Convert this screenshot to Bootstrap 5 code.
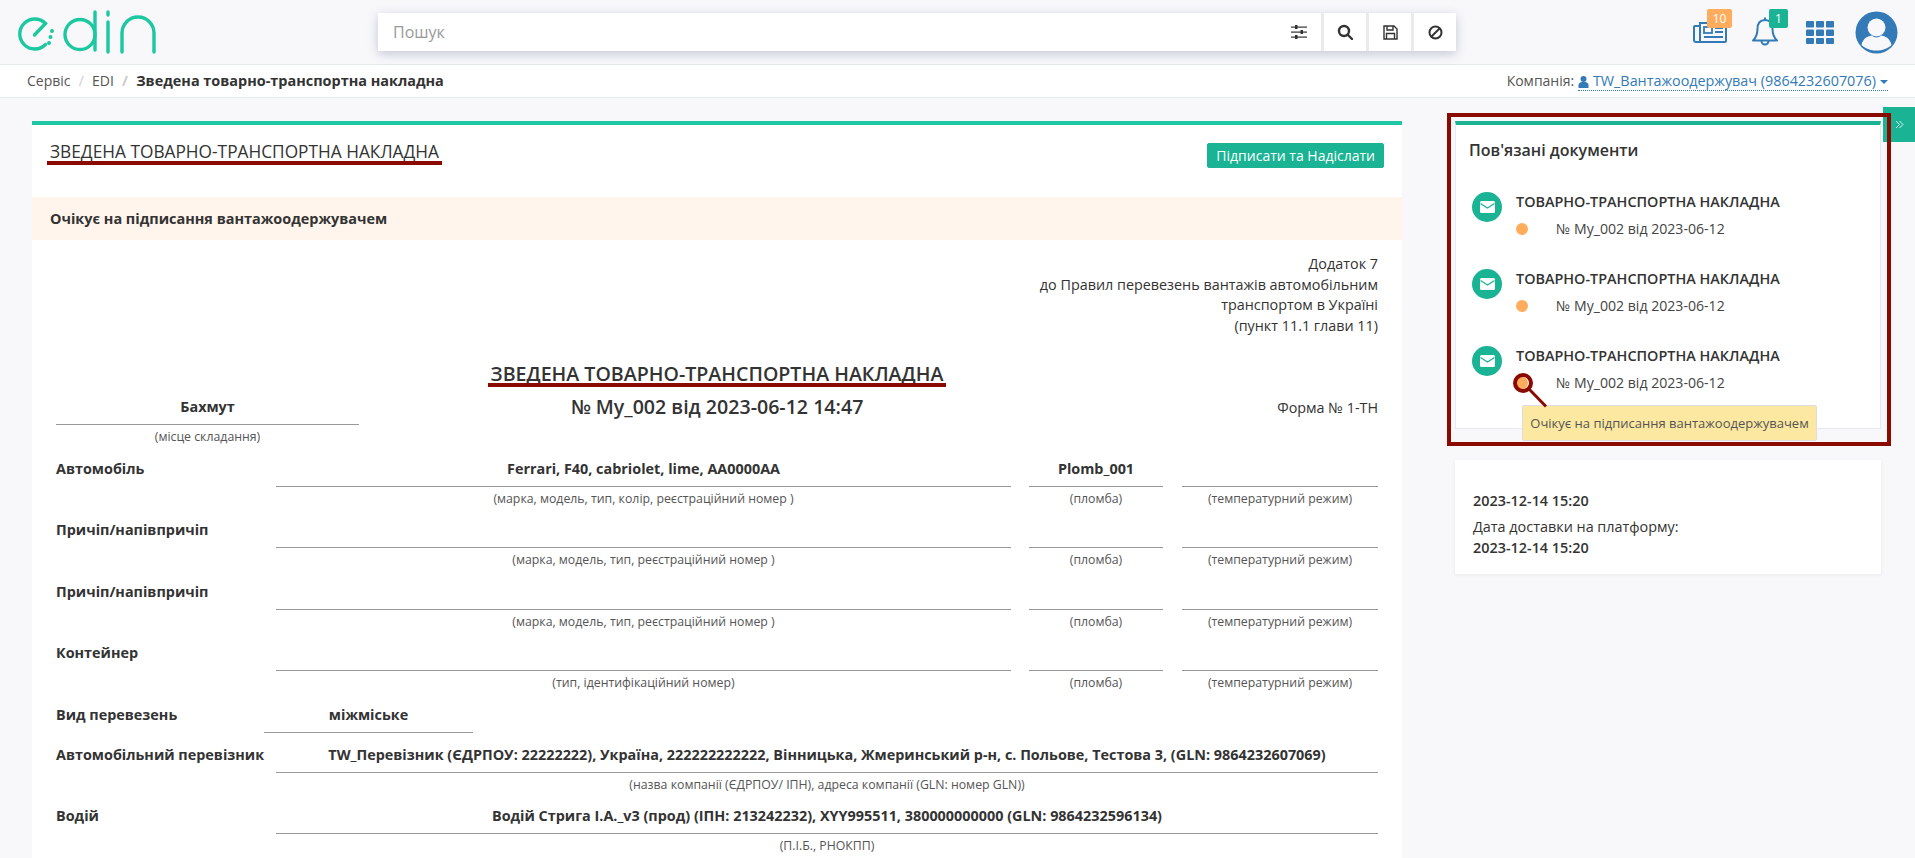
<!DOCTYPE html>
<html lang="uk">
<head>
  <meta charset="UTF-8">
  <meta name="viewport" content="width=device-width, initial-scale=1.0">
  <title>Зведена товарно-транспортна накладна</title>
  <link href="https://cdn.jsdelivr.net/npm/bootstrap@5.3.0/dist/css/bootstrap.min.css" rel="stylesheet">
  <style>
    html, body { height: 858px; overflow: hidden; }
    body { background: #f8f8fb; color: #333; font-family: "Open Sans", "Noto Sans", sans-serif; font-size: 14px; line-height: 20.5px; }

    /* header */
    .top-head { height: 65px; border-bottom: 1px solid #e7eaec; }
    .search-box { width: 1078px; height: 38px; margin-left: 208px; background: #fff; box-shadow: 0 3px 10px rgba(70, 75, 110, .28); }
    .search-text { padding-left: 15px; font-size: 16px; color: #999; }
    .search-btn { width: 45px; height: 38px; border-left: 3px solid #e9e9ee; }
    .search-btn-first { border-left: 0; }
    .head-icons { margin-right: 17px; }
    .head-icon { height: 44px; }
    .head-badge { position: absolute; top: -1px; height: 19px; border-radius: 2px; color: #fff; font-size: 12px; line-height: 19px; text-align: center; }
    .bg-orange { background: #ffad5c; }
    .bg-teal { background: #1ab394; }

    /* breadcrumb */
    .crumb-bar { height: 33px; padding: 0 27px 0 27px; background: #fff; border-bottom: 1px solid #e7eaec; }
    .crumb-bar .breadcrumb { --bs-breadcrumb-margin-bottom: 0; --bs-breadcrumb-divider-color: #ccc; --bs-breadcrumb-item-active-color: #333; --bs-breadcrumb-item-padding-x: 8.2px; color: #555; }
    .crumb-bold { font-weight: 700; font-size: 14.45px; }
    .company-link { color: #337ab7; text-decoration: none; border-bottom: 1px dotted #337ab7; line-height: 18px; font-size: 14.37px; }
    .company-text { color: #555; margin-right: 4px; }
    .caret-down { display: inline-block; margin-left: 4px; border: 4px solid transparent; border-top-color: #337ab7; border-bottom: 0; vertical-align: 2px; }

    /* layout */
    .page-body { padding: 23px 0 0 32px; }
    .main-sheet { width: 1370px; height: 760px; overflow: hidden; background: #fff; border-top: 4px solid #1fc8a5; }
    .side-col { width: 426px; margin-left: 53px; }
    .sheet-head { height: 72px; padding: 14px 18px 0 18px; }
    .sheet-title { font-size: 17.3px; line-height: 26px; margin: 0; font-weight: 400; text-transform: uppercase; }
    .sign-btn { --bs-btn-bg: #1ab394; --bs-btn-border-color: #1ab394; --bs-btn-color: #fff; --bs-btn-hover-bg: #18a689; --bs-btn-hover-color: #fff; --bs-btn-border-radius: 2px; --bs-btn-padding-y: 0; --bs-btn-padding-x: 8px; --bs-btn-font-size: 14px; --bs-btn-line-height: 23px; margin-top: 4px; }
    .state-strip { height: 43px; padding: 2px 0 0 18px; background: #fff5ec; font-weight: 700; font-size: 14.45px; }

    /* red annotations */
    .red-under { position: relative; display: inline-block; }
    .red-under::after { content: ""; position: absolute; left: -3px; right: -3px; bottom: 0; height: 4px; background: #8b0a00; }
    .red-frame { position: absolute; top: -8px; left: -8px; right: -10px; bottom: -17px; border: 4px solid #8b0a00; pointer-events: none; z-index: 3; }
    .red-pin { position: absolute; left: 54px; top: 248px; z-index: 4; }
    .side-toggle { position: absolute; top: 107px; right: 0; width: 32px; height: 35px; background: #1ab394; z-index: 2; }

    /* document */
    .doc-form { padding: 14px 24px 0 24px; }
    .doc-note { font-size: 14.36px; line-height: 20.5px; }
    .doc-title { margin: 25px 0 4px; font-size: 19.6px; font-weight: 600; line-height: 26px; text-transform: uppercase; }
    .doc-number { font-size: 19.6px; font-weight: 600; line-height: 32px; }
    .doc-form-no { font-size: 14.36px; line-height: 34px; }
    .form-row { display: flex; }
    .cell-value { height: 34px; line-height: 32px; text-align: center; font-weight: 700; font-size: 14.4px; border-bottom: 1px solid #999; }
    .cell-hint { height: 27.5px; padding-top: 2px; line-height: 20px; text-align: center; font-size: 12.3px; color: #555; }
    .form-label-cell { width: 220px; flex: none; line-height: 32px; font-weight: 700; font-size: 14.4px; white-space: nowrap; }
    .col-wide { width: 735px; }
    .col-full { width: 1102px; }
    .col-plomb { width: 134px; margin-left: 18px; }
    .col-temp { width: 196px; margin-left: 19px; }
    .col-place { width: 303px; flex: none; }
    .kind-row { margin-bottom: 6px; }
    .kind-row .form-label-cell { width: 208px; }
    .kind-value { width: 209px; }

    /* related documents */
    .rel-wrap { position: relative; }
    .rel-card { height: 308px; background: #fff; border: 1px solid #e7eaec; border-top: 4px solid #1ab394; padding: 0 13px; }
    .rel-title { margin: 0; padding-top: 12px; height: 67px; font-size: 16px; font-weight: 600; line-height: 26px; }
    .rel-item { height: 77px; }
    .rel-icon { width: 30px; height: 30px; flex: none; border-radius: 50%; background: #1ab394; margin-left: 3px; margin-right: 14px; }
    .rel-name { font-weight: 600; font-size: 14.4px; line-height: 20px; }
    .rel-sub { margin-top: 7px; line-height: 20px; font-size: 14.1px; color: #444; }
    .rel-dot { display: inline-block; width: 12px; height: 12px; border-radius: 50%; background: #ffad5c; margin-right: 28px; vertical-align: -1px; }
    .state-tip { position: absolute; left: 67px; top: 284px; width: 295px; height: 36px; background: #fce8a0; border: 1px solid #ddd; border-radius: 2px; color: #555; font-size: 13px; line-height: 34px; text-align: center; z-index: 2; }
    .date-card { margin-top: 31px; height: 114px; padding: 30px 18px 0; background: #fff; box-shadow: 0 1px 4px rgba(60, 60, 90, .08); line-height: 21px; font-size: 14.4px; }
    .date-card b { display: block; font-weight: 600; }
    .date-card b:first-child { margin-bottom: 5px; }
    .date-card p { margin: 0; }
  </style>
</head>
<body>

<!-- Header -->
<header class="top-head d-flex align-items-center">
  <svg width="170" height="64" viewBox="0 0 170 64" fill="none" stroke="#1cc8a0" stroke-width="3.4" stroke-linecap="round">
    <path d="M34.5 35 L45.5 23.500 A15 15 0 1 0 45.500 44.500"/>
    <circle cx="52" cy="31" r="1.2" fill="#1cc8a0" stroke-width="1.6"/>
    <circle cx="50.5" cy="37" r="1.2" fill="#1cc8a0" stroke-width="1.6"/>
    <circle cx="49" cy="43" r="1.2" fill="#1cc8a0" stroke-width="1.6"/>
    <circle cx="80" cy="34.500" r="15"/>
    <path d="M95 12 V50"/>
    <path d="M108 12 V15 M108 22 V52"/>
    <path d="M122 52 V33 A16 16 0 0 1 154 33 V52"/>
  </svg>
  <div class="search-box d-flex align-items-center">
    <span class="search-text flex-grow-1">Пошук</span>
    <span class="search-btn search-btn-first d-flex align-items-center justify-content-center">
      <svg width="16" height="14" viewBox="0 0 16 14" fill="#333"><rect y="1.5" width="16" height="1.2"/><rect y="6.5" width="16" height="1.2"/><rect y="11.5" width="16" height="1.2"/><rect x="4" y="0" width="2.5" height="4"/><rect x="9.5" y="5" width="2.5" height="4"/><rect x="4" y="10" width="2.5" height="4"/></svg>
    </span>
    <span class="search-btn d-flex align-items-center justify-content-center">
      <svg width="16" height="16" viewBox="0 0 16 16" fill="none" stroke="#333" stroke-width="2.4"><circle cx="7" cy="7" r="5"/><path d="M10.5 10.5 L15 15" stroke-linecap="round"/></svg>
    </span>
    <span class="search-btn d-flex align-items-center justify-content-center">
      <svg width="15" height="15" viewBox="0 0 15 15" fill="none" stroke="#333" stroke-width="1.4"><path d="M1 1 H11 L14 4 V14 H1 Z"/><path d="M4 1 V5 H10 V1"/><path d="M3.5 14 V8.5 H11.5 V14"/></svg>
    </span>
    <span class="search-btn d-flex align-items-center justify-content-center">
      <svg width="15" height="15" viewBox="0 0 15 15" fill="none" stroke="#333" stroke-width="2"><circle cx="7.5" cy="7.5" r="6"/><path d="M3.5 11.5 L11.5 3.5"/></svg>
    </span>
  </div>
  <div class="head-icons ms-auto d-flex align-items-center">
    <div class="head-icon position-relative">
      <svg width="34" height="44" viewBox="0 10 34 44" fill="none" stroke="#337ab7" stroke-width="2"><path d="M7 23 V42 H32 a1 1 0 0 0 1 -1 V23 Z"/><path d="M7 26 H2 a1 1 0 0 0 -1 1 V40 a2 2 0 0 0 2 2 H8"/><rect x="11" y="27" width="8" height="6" stroke-width="1.8"/><path d="M22 28 H30 M22 32 H30 M11 37 H30" stroke-width="1.8"/></svg>
      <span class="head-badge bg-orange" style="left:14px;width:25px">10</span>
    </div>
    <div class="head-icon position-relative ms-4">
      <svg width="28" height="44" viewBox="0 10 28 44" fill="none" stroke="#337ab7" stroke-width="2" stroke-linejoin="round"><path d="M14 20 C8 20 6.500 24 6.500 29 C6.500 35 4.500 38 2 40.500 H26 C23.500 38 21.500 35 21.500 29 C21.500 24 20 20 14 20 Z"/><path d="M10.500 41 a3.500 3.500 0 0 0 7 0"/><path d="M14 17.500 V20"/></svg>
      <span class="head-badge bg-teal" style="left:18px;width:19px">1</span>
    </div>
    <div class="head-icon ms-4">
      <svg width="36" height="44" viewBox="0 10 36 44" fill="#337ab7"><rect x="3" y="21" width="8" height="6.500" rx="1"/><rect x="13" y="21" width="8" height="6.500" rx="1"/><rect x="23" y="21" width="8" height="6.500" rx="1"/><rect x="3" y="29.500" width="8" height="6.500" rx="1"/><rect x="13" y="29.500" width="8" height="6.500" rx="1"/><rect x="23" y="29.500" width="8" height="6.500" rx="1"/><rect x="3" y="38" width="8" height="6" rx="1"/><rect x="13" y="38" width="8" height="6" rx="1"/><rect x="23" y="38" width="8" height="6" rx="1"/></svg>
    </div>
    <svg class="ms-3" width="43" height="43" viewBox="0 0 43 43"><circle cx="21.500" cy="21.500" r="21" fill="#337ab7"/><circle cx="21.500" cy="16.500" r="9" fill="#f8f8fb"/><path d="M6.500 34 C8 27 13 25 17 24.500 C19 27 24 27 26 24.500 C30 25 35 27 36.500 34 C33 37.500 27.500 39.500 21.500 39.500 C15.500 39.500 10 37.500 6.500 34 Z" fill="#f8f8fb"/></svg>
  </div>
</header>

<!-- Breadcrumb -->
<div class="crumb-bar d-flex align-items-center justify-content-between">
  <ol class="breadcrumb">
    <li class="breadcrumb-item">Сервіс</li>
    <li class="breadcrumb-item">EDI</li>
    <li class="breadcrumb-item active crumb-bold">Зведена товарно-транспортна накладна</li>
  </ol>
  <div>
    <span class="company-text">Компанія:</span><a class="company-link" href="#"><svg width="11" height="12" viewBox="0 0 11 12" fill="#337ab7"><circle cx="5.500" cy="3" r="3"/><path d="M0.500 12 V9 C0.500 7 2.500 6 4 6 H7 C8.500 6 10.500 7 10.500 9 V12 Z"/></svg> TW_Вантажоодержувач (9864232607076)<span class="caret-down"></span></a>
  </div>
</div>

<div class="side-toggle d-flex align-items-center justify-content-center">
  <svg width="9" height="9" viewBox="0 0 9 9" fill="none" stroke="#d8f3ec" stroke-width="1"><path d="M1 1 L4.500 4.500 L1 8"/><path d="M4.500 1 L8 4.500 L4.500 8"/></svg>
</div>

<div class="page-body d-flex align-items-start">
  <!-- Document -->
  <main class="main-sheet">
    <div class="sheet-head d-flex justify-content-between align-items-start">
      <h1 class="sheet-title"><span class="red-under">Зведена товарно-транспортна накладна</span></h1>
      <button type="button" class="btn sign-btn">Підписати та Надіслати</button>
    </div>
    <div class="state-strip d-flex align-items-center">Очікує на підписання вантажоодержувачем</div>

    <div class="doc-form">
      <div class="doc-note text-end">Додаток 7<br>до Правил перевезень вантажів автомобільним<br>транспортом в Україні<br>(пункт 11.1 глави 11)</div>
      <h2 class="doc-title text-center"><span class="red-under">Зведена товарно-транспортна накладна</span></h2>

      <div class="form-row">
        <div class="col-place">
          <div class="cell-value">Бахмут</div>
          <div class="cell-hint">(місце складання)</div>
        </div>
        <div class="doc-number flex-grow-1 text-center">№ My_002 від 2023-06-12 14:47</div>
        <div class="col-place text-end doc-form-no">Форма № 1-ТН</div>
      </div>

      <div class="form-row">
        <div class="form-label-cell">Автомобіль</div>
        <div class="col-wide"><div class="cell-value">Ferrari, F40, cabriolet, lime, AA0000AA</div><div class="cell-hint">(марка, модель, тип, колір, реєстраційний номер )</div></div>
        <div class="col-plomb"><div class="cell-value">Plomb_001</div><div class="cell-hint">(пломба)</div></div>
        <div class="col-temp"><div class="cell-value"></div><div class="cell-hint">(температурний режим)</div></div>
      </div>
      <div class="form-row">
        <div class="form-label-cell">Причіп/напівпричіп</div>
        <div class="col-wide"><div class="cell-value"></div><div class="cell-hint">(марка, модель, тип, реєстраційний номер )</div></div>
        <div class="col-plomb"><div class="cell-value"></div><div class="cell-hint">(пломба)</div></div>
        <div class="col-temp"><div class="cell-value"></div><div class="cell-hint">(температурний режим)</div></div>
      </div>
      <div class="form-row">
        <div class="form-label-cell">Причіп/напівпричіп</div>
        <div class="col-wide"><div class="cell-value"></div><div class="cell-hint">(марка, модель, тип, реєстраційний номер )</div></div>
        <div class="col-plomb"><div class="cell-value"></div><div class="cell-hint">(пломба)</div></div>
        <div class="col-temp"><div class="cell-value"></div><div class="cell-hint">(температурний режим)</div></div>
      </div>
      <div class="form-row">
        <div class="form-label-cell">Контейнер</div>
        <div class="col-wide"><div class="cell-value"></div><div class="cell-hint">(тип, ідентифікаційний номер)</div></div>
        <div class="col-plomb"><div class="cell-value"></div><div class="cell-hint">(пломба)</div></div>
        <div class="col-temp"><div class="cell-value"></div><div class="cell-hint">(температурний режим)</div></div>
      </div>
      <div class="form-row kind-row">
        <div class="form-label-cell">Вид перевезень</div>
        <div class="kind-value"><div class="cell-value">міжміське</div></div>
      </div>
      <div class="form-row">
        <div class="form-label-cell">Автомобільний перевізник</div>
        <div class="col-full"><div class="cell-value">TW_Перевізник (ЄДРПОУ: 22222222), Україна, 222222222222, Вінницька, Жмеринський р-н, с. Польове, Тестова 3, (GLN: 9864232607069)</div><div class="cell-hint">(назва компанії (ЄДРПОУ/ ІПН), адреса компанії (GLN: номер GLN))</div></div>
      </div>
      <div class="form-row">
        <div class="form-label-cell">Водій</div>
        <div class="col-full"><div class="cell-value">Водій Стрига І.А._v3 (прод) (ІПН: 213242232), XYY995511, 380000000000 (GLN: 9864232596134)</div><div class="cell-hint">(П.І.Б., РНОКПП)</div></div>
      </div>
    </div>
  </main>

  <!-- Related documents -->
  <aside class="side-col">
    <div class="rel-wrap">
      <div class="rel-card">
        <h3 class="rel-title">Пов'язані документи</h3>
        <div class="rel-item d-flex">
          <span class="rel-icon d-flex align-items-center justify-content-center"><svg width="15" height="12" viewBox="0 0 15 12"><rect width="15" height="12" rx="1.500" fill="#fff"/><path d="M0.500 2.500 L7.500 7 L14.500 2.500" fill="none" stroke="#1ab394" stroke-width="1.200"/></svg></span>
          <div><div class="rel-name">ТОВАРНО-ТРАНСПОРТНА НАКЛАДНА</div><div class="rel-sub"><span class="rel-dot"></span>№ My_002 від 2023-06-12</div></div>
        </div>
        <div class="rel-item d-flex">
          <span class="rel-icon d-flex align-items-center justify-content-center"><svg width="15" height="12" viewBox="0 0 15 12"><rect width="15" height="12" rx="1.500" fill="#fff"/><path d="M0.500 2.500 L7.500 7 L14.500 2.500" fill="none" stroke="#1ab394" stroke-width="1.200"/></svg></span>
          <div><div class="rel-name">ТОВАРНО-ТРАНСПОРТНА НАКЛАДНА</div><div class="rel-sub"><span class="rel-dot"></span>№ My_002 від 2023-06-12</div></div>
        </div>
        <div class="rel-item d-flex">
          <span class="rel-icon d-flex align-items-center justify-content-center"><svg width="15" height="12" viewBox="0 0 15 12"><rect width="15" height="12" rx="1.500" fill="#fff"/><path d="M0.500 2.500 L7.500 7 L14.500 2.500" fill="none" stroke="#1ab394" stroke-width="1.200"/></svg></span>
          <div><div class="rel-name">ТОВАРНО-ТРАНСПОРТНА НАКЛАДНА</div><div class="rel-sub"><span class="rel-dot"></span>№ My_002 від 2023-06-12</div></div>
        </div>
      </div>
      <div class="state-tip">Очікує на підписання вантажоодержувачем</div>
      <svg class="red-pin" width="44" height="44" viewBox="0 0 44 44" fill="none" stroke="#8b0a00" stroke-width="4"><circle cx="14" cy="14" r="8"/><path d="M20 20 L37 37.500" stroke-width="3"/></svg>
      <div class="red-frame"></div>
    </div>

    <div class="date-card">
      <b>2023-12-14 15:20</b>
      <p>Дата доставки на платформу:</p>
      <b>2023-12-14 15:20</b>
    </div>
  </aside>
</div>

<script src="https://cdn.jsdelivr.net/npm/bootstrap@5.3.0/dist/js/bootstrap.bundle.min.js"></script>
</body>
</html>
